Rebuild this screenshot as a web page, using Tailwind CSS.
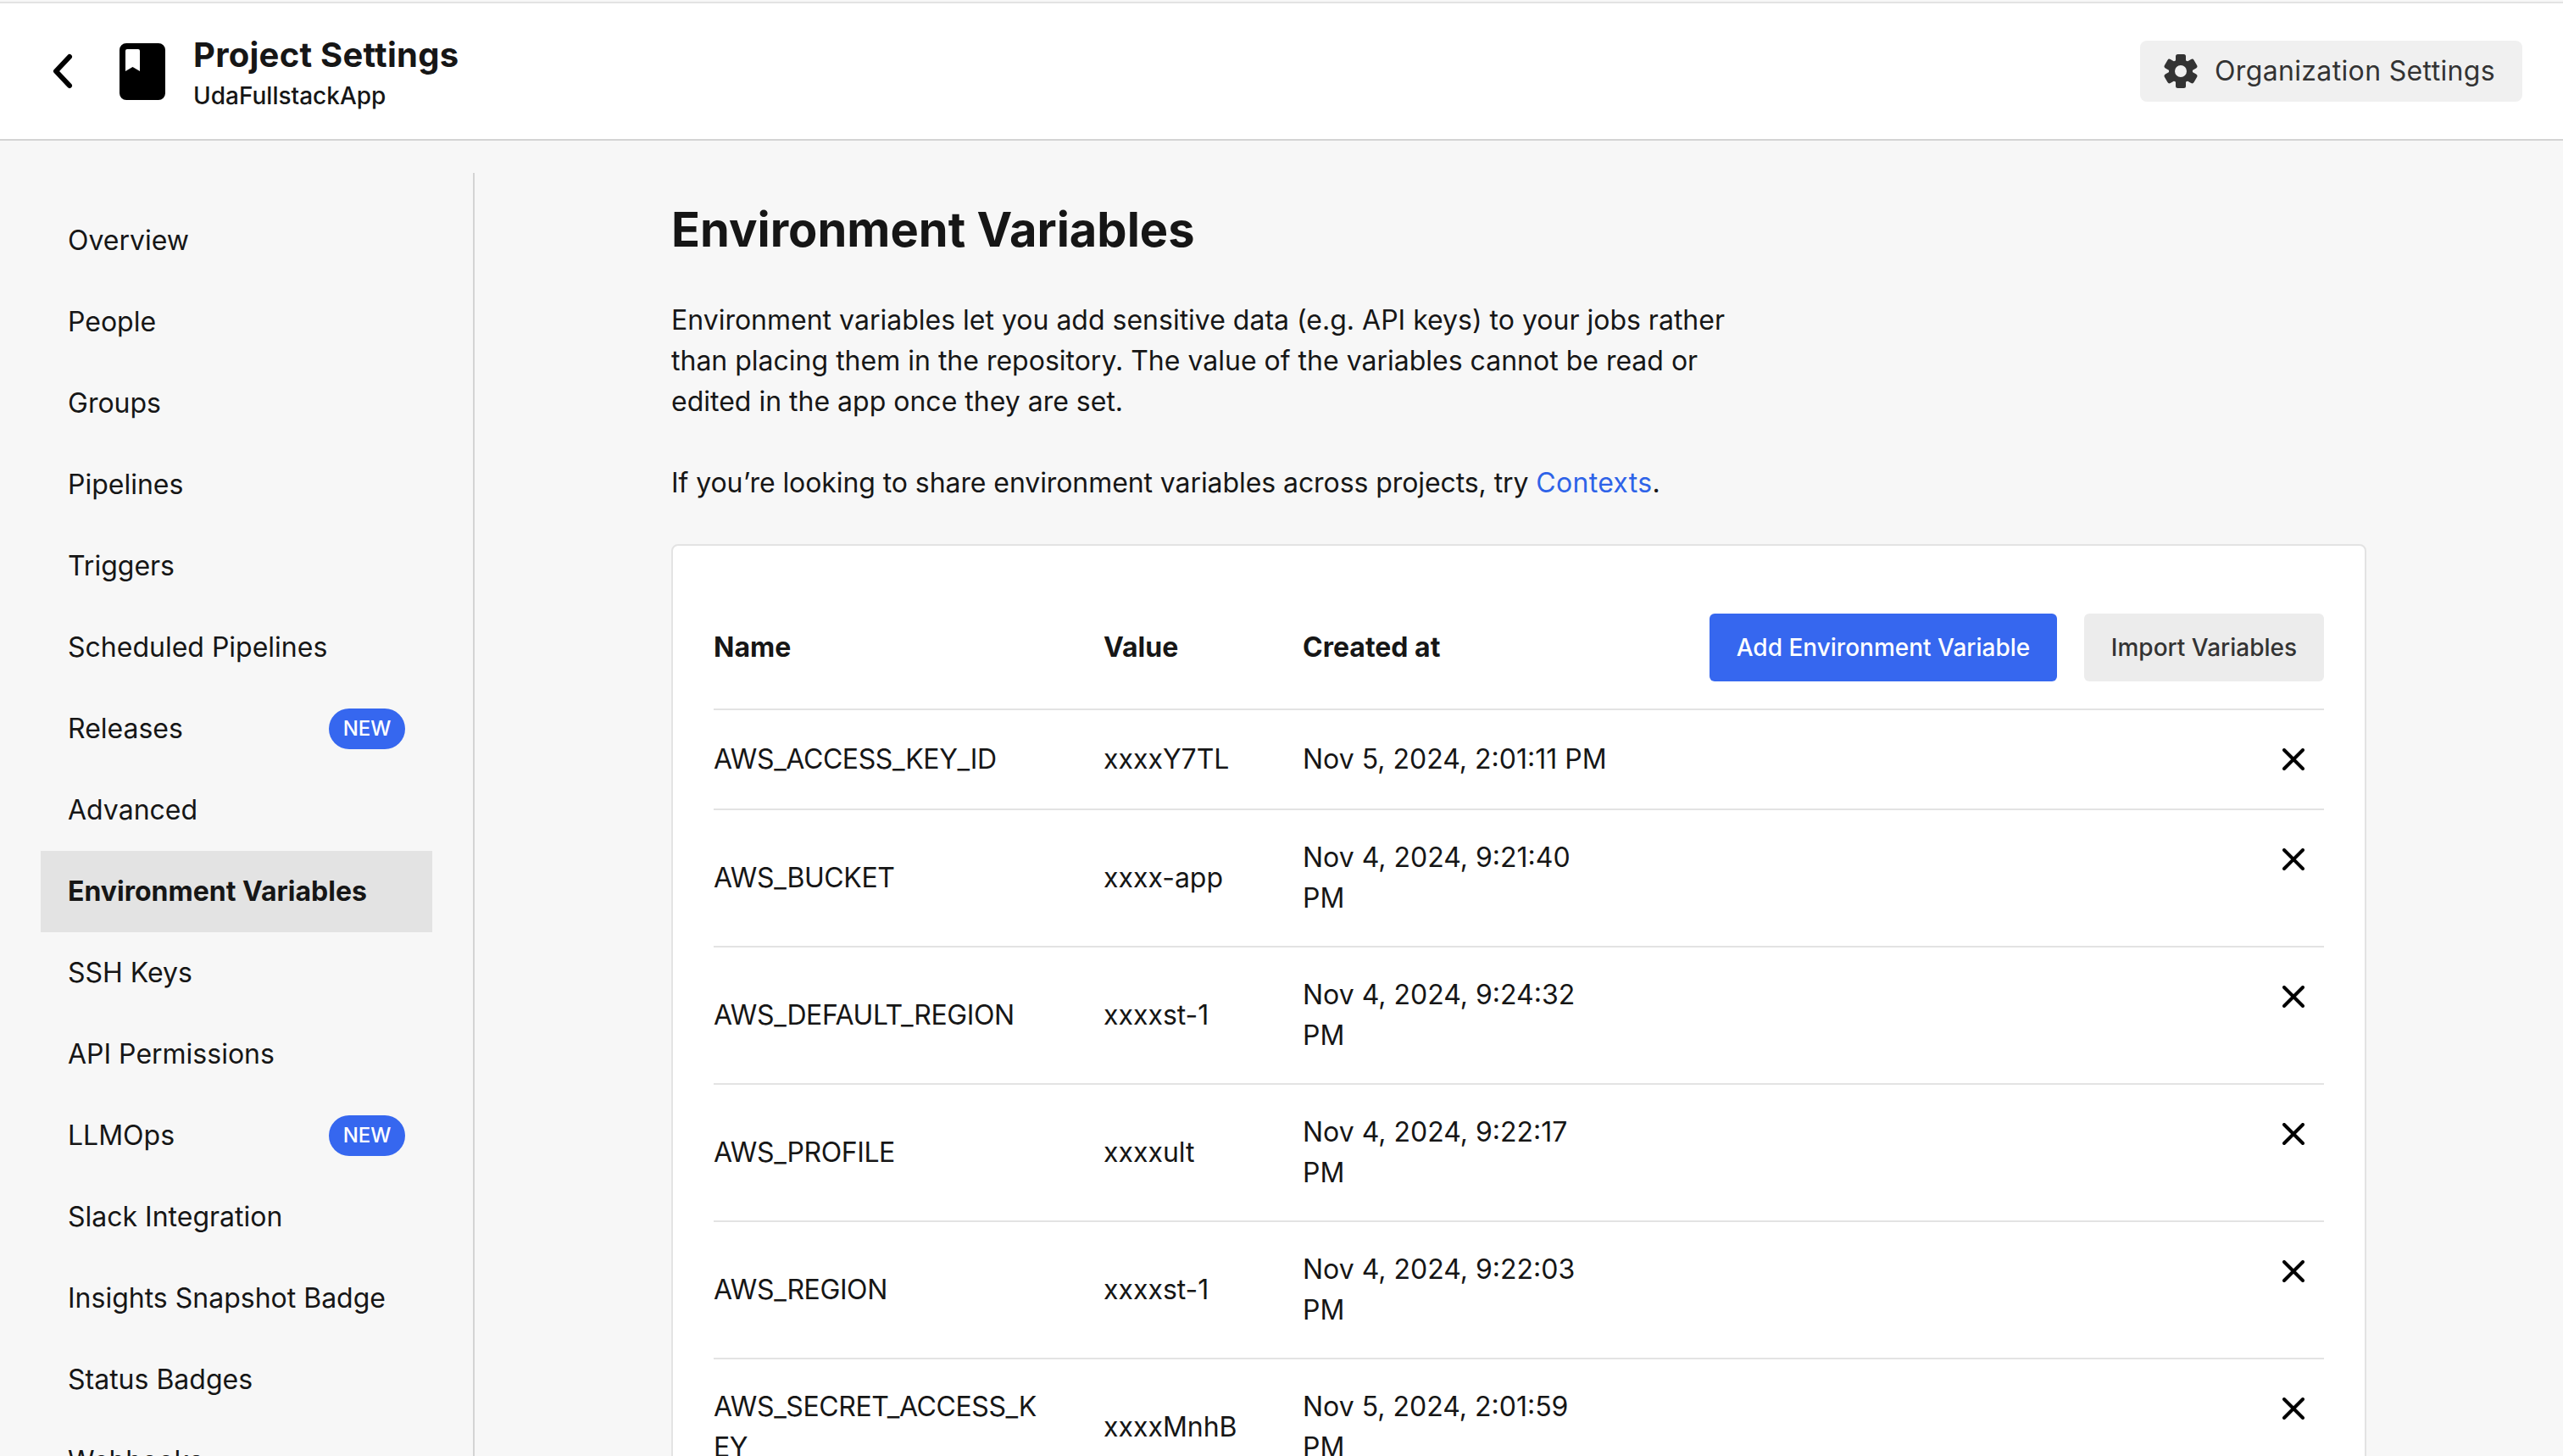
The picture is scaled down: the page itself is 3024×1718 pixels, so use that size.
<!DOCTYPE html>
<html lang="en">
<head>
    <meta charset="UTF-8">
    <title>Project Settings</title>
    <script src="https://cdn.jsdelivr.net/npm/@tailwindcss/browser@4"></script>
</head>
<body class="h-[1718px] overflow-hidden bg-[#f7f7f7] font-['Inter',sans-serif] text-[32px] leading-[48px] text-[#161616]">
    <!-- header -->
    <header class="mt-[2px] h-[164px] flex items-center justify-between bg-white border-t-2 border-b-2 border-t-[#e3e3e3] border-b-[#d4d4d4] pr-[48px]">
        <div class="flex items-center">
            <svg class="ml-[57px] w-[32px] h-[48px]" viewBox="0 0 32 48" fill="none" stroke="#000" stroke-width="6" stroke-linecap="round" stroke-linejoin="round"><path d="M25 7 9 24l16 17"/></svg>
            <svg class="ml-[52px] w-[54px] h-[67px]" viewBox="0 0 54 67"><path fill="#000" fill-rule="evenodd" d="M8 0h38a8 8 0 0 1 8 8v51a8 8 0 0 1-8 8H8a8 8 0 0 1-8-8V8a8 8 0 0 1 8-8zm1 7a2 2 0 0 0-2 2v24l8.500-5 8.500 5V9a2 2 0 0 0-2-2z"/></svg>
            <div class="ml-[33px] flex flex-col gap-[3px]">
                <h1 class="text-[40px] leading-[54px] font-bold tracking-[0.25px]">Project Settings</h1>
                <p class="text-[28px] leading-[36px] font-medium">UdaFullstackApp</p>
            </div>
        </div>
        <button class="w-[451px] h-[72px] flex items-center gap-[20px] pl-[28px] bg-[#f0f0f0] rounded-[8px] text-[#333] tracking-[0.35px]">
            <svg class="w-[40px] h-[40px]" viewBox="0 0 40 40" fill="#333">
                <circle cx="20" cy="20" r="10.500" fill="none" stroke="#333" stroke-width="7"/>
                <rect x="14" width="12" height="10" rx="2.500"/>
                <rect x="14" width="12" height="10" rx="2.500" transform="rotate(60 20 20)"/>
                <rect x="14" width="12" height="10" rx="2.500" transform="rotate(120 20 20)"/>
                <rect x="14" width="12" height="10" rx="2.500" transform="rotate(180 20 20)"/>
                <rect x="14" width="12" height="10" rx="2.500" transform="rotate(240 20 20)"/>
                <rect x="14" width="12" height="10" rx="2.500" transform="rotate(300 20 20)"/>
            </svg>
            <span>Organization Settings</span>
        </button>
    </header>

    <div class="flex">
        <!-- sidebar -->
        <nav class="mt-[38px] ml-[48px] w-[512px] h-[1600px] pt-[32px] border-r-2 border-[#d4d4d4] shrink-0">
            <ul class="w-[462px]">
                <li class="h-[96px] flex items-center px-[32px]">Overview</li>
                <li class="h-[96px] flex items-center px-[32px]">People</li>
                <li class="h-[96px] flex items-center px-[32px]">Groups</li>
                <li class="h-[96px] flex items-center px-[32px]">Pipelines</li>
                <li class="h-[96px] flex items-center px-[32px]">Triggers</li>
                <li class="h-[96px] flex items-center px-[32px]">Scheduled Pipelines</li>
                <li class="h-[96px] flex items-center justify-between px-[32px]">Releases <span class="w-[90px] h-[48px] flex items-center justify-center rounded-full bg-[#3667ef] text-white text-[24px] font-medium">NEW</span></li>
                <li class="h-[96px] flex items-center px-[32px]">Advanced</li>
                <li class="h-[96px] flex items-center px-[32px] bg-[#e3e3e3] font-bold">Environment Variables</li>
                <li class="h-[96px] flex items-center px-[32px]">SSH Keys</li>
                <li class="h-[96px] flex items-center px-[32px]">API Permissions</li>
                <li class="h-[96px] flex items-center justify-between px-[32px]">LLMOps <span class="w-[90px] h-[48px] flex items-center justify-center rounded-full bg-[#3667ef] text-white text-[24px] font-medium">NEW</span></li>
                <li class="h-[96px] flex items-center px-[32px]">Slack Integration</li>
                <li class="h-[96px] flex items-center px-[32px]">Insights Snapshot Badge</li>
                <li class="h-[96px] flex items-center px-[32px]">Status Badges</li>
                <li class="h-[96px] flex items-center px-[32px]">Webhooks</li>
            </ul>
        </nav>

        <!-- main -->
        <main class="ml-[232px] w-[2000px] shrink-0">
            <h2 class="mt-[69px] text-[56px] leading-[72px] font-bold">Environment Variables</h2>
            <p class="mt-[47px] w-[1300px]">Environment variables let you add sensitive data (e.g. API keys) to your jobs rather<br>than placing them in the repository. The value of the variables cannot be read or<br>edited in the app once they are set.</p>
            <p class="mt-[48px] tracking-[-0.08px]">If you’re looking to share environment variables across projects, try <a class="text-[#2e63e8] tracking-[0.3px]">Contexts</a>.</p>

            <section class="mt-[48px] bg-white border-2 border-[#e3e3e3] rounded-[8px] px-[48px]">
                <div class="h-[192px] pt-[80px] grid grid-cols-[460px_235px_1fr_auto] items-start">
                    <div class="h-[80px] flex items-center font-bold">Name</div>
                    <div class="h-[80px] flex items-center font-bold">Value</div>
                    <div class="h-[80px] flex items-center font-bold">Created at</div>
                    <div class="flex gap-[32px] text-[28px]">
                        <button class="w-[410px] h-[80px] bg-[#3667ef] rounded-[6px] text-white font-medium">Add Environment Variable</button>
                        <button class="w-[283px] h-[80px] bg-[#ececec] rounded-[6px] text-[#333] font-medium">Import Variables</button>
                    </div>
                </div>

                <div class="h-[118px] border-t-2 border-[#e3e3e3] grid grid-cols-[460px_235px_1fr_auto] items-center">
                    <div class="tracking-[-0.4px]">AWS_ACCESS_KEY_ID</div><div>xxxxY7TL</div><div>Nov 5, 2024, 2:01:11 PM</div>
                    <svg class="w-[26px] h-[26px] mr-[23px]" viewBox="0 0 26 26" fill="none" stroke="#000" stroke-width="4" stroke-linecap="round"><path d="m2 2 22 22M24 2 2 24"/></svg>
                </div>
                <div class="h-[162px] border-t-2 border-[#e3e3e3] grid grid-cols-[460px_235px_1fr_auto] items-center">
                    <div class="tracking-[-0.4px]">AWS_BUCKET</div><div>xxxx-app</div><div>Nov 4, 2024, 9:21:40<br>PM</div>
                    <svg class="w-[26px] h-[26px] mr-[23px] self-start mt-[45px]" viewBox="0 0 26 26" fill="none" stroke="#000" stroke-width="4" stroke-linecap="round"><path d="m2 2 22 22M24 2 2 24"/></svg>
                </div>
                <div class="h-[162px] border-t-2 border-[#e3e3e3] grid grid-cols-[460px_235px_1fr_auto] items-center">
                    <div class="tracking-[-0.4px]">AWS_DEFAULT_REGION</div><div>xxxxst-1</div><div>Nov 4, 2024, 9:24:32<br>PM</div>
                    <svg class="w-[26px] h-[26px] mr-[23px] self-start mt-[45px]" viewBox="0 0 26 26" fill="none" stroke="#000" stroke-width="4" stroke-linecap="round"><path d="m2 2 22 22M24 2 2 24"/></svg>
                </div>
                <div class="h-[162px] border-t-2 border-[#e3e3e3] grid grid-cols-[460px_235px_1fr_auto] items-center">
                    <div class="tracking-[-0.4px]">AWS_PROFILE</div><div>xxxxult</div><div>Nov 4, 2024, 9:22:17<br>PM</div>
                    <svg class="w-[26px] h-[26px] mr-[23px] self-start mt-[45px]" viewBox="0 0 26 26" fill="none" stroke="#000" stroke-width="4" stroke-linecap="round"><path d="m2 2 22 22M24 2 2 24"/></svg>
                </div>
                <div class="h-[162px] border-t-2 border-[#e3e3e3] grid grid-cols-[460px_235px_1fr_auto] items-center">
                    <div class="tracking-[-0.4px]">AWS_REGION</div><div>xxxxst-1</div><div>Nov 4, 2024, 9:22:03<br>PM</div>
                    <svg class="w-[26px] h-[26px] mr-[23px] self-start mt-[45px]" viewBox="0 0 26 26" fill="none" stroke="#000" stroke-width="4" stroke-linecap="round"><path d="m2 2 22 22M24 2 2 24"/></svg>
                </div>
                <div class="h-[162px] border-t-2 border-[#e3e3e3] grid grid-cols-[460px_235px_1fr_auto] items-center">
                    <div class="tracking-[-0.4px]">AWS_SECRET_ACCESS_K<br>EY</div><div>xxxxMnhB</div><div>Nov 5, 2024, 2:01:59<br>PM</div>
                    <svg class="w-[26px] h-[26px] mr-[23px] self-start mt-[45px]" viewBox="0 0 26 26" fill="none" stroke="#000" stroke-width="4" stroke-linecap="round"><path d="m2 2 22 22M24 2 2 24"/></svg>
                </div>
            </section>
        </main>
    </div>
</body>
</html>
